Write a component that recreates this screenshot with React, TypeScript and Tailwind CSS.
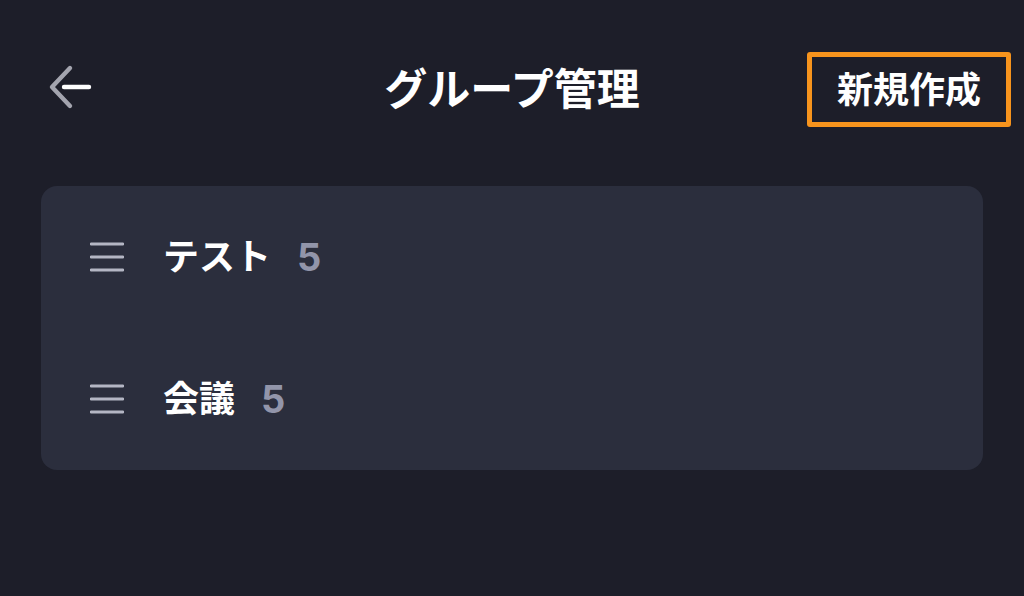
import React from 'react';

const groups = [
  { name: 'テスト', count: 5 },
  { name: '会議', count: 5 },
];

const BackArrow = () => (
  <svg width="48" height="75" viewBox="0 0 48 75" fill="none">
    <path d="M22 16 L4 35 L22 54" stroke="#a3a4ae" strokeWidth="4.4" strokeLinecap="round" strokeLinejoin="round" />
    <path d="M16 35 H41" stroke="#ffffff" strokeWidth="4.4" strokeLinecap="round" />
  </svg>
);

const DragHandle = () => (
  <svg width="34" height="30" viewBox="0 0 34 30" fill="none">
    <path d="M1 2 H33 M1 15 H33 M1 28 H33" stroke="#b4b6c4" strokeWidth="2.8" strokeLinecap="round" />
  </svg>
);

const App = () => {
  return (
    <div
      className="w-[1024px] h-[596px] bg-[#1d1e29] overflow-hidden"
      style={{ fontFamily: 'Inter, "Noto Sans CJK JP", sans-serif' }}
    >
      {/* header */}
      <div className="grid grid-cols-[1fr_auto_1fr] items-center pt-[52px] h-[127px]">
        <div className="pl-[48px] flex items-center">
          <BackArrow />
        </div>
        <h1 className="text-[43px] font-bold text-white leading-none">グループ管理</h1>
        <div className="flex justify-end pr-[13px]">
          <button className="h-[75px] w-[204px] border-[5px] border-[#f7941d] rounded-[3px] text-white text-[36px] font-bold leading-none flex items-center justify-center">
            新規作成
          </button>
        </div>
      </div>

      {/* group list */}
      <div className="mt-[59px] mx-[41px] bg-[#2b2e3d] rounded-[16px]">
        {groups.map((g) => (
          <div key={g.name} className="h-[142px] flex items-center pl-[49px]">
            <DragHandle />
            <span className="ml-[39px] text-[36px] font-bold text-white leading-none">{g.name}</span>
            <span className="ml-[26px] text-[38px] font-bold text-[#9295aa] leading-none">{g.count}</span>
          </div>
        ))}
      </div>
    </div>
  );
};

export default App;
